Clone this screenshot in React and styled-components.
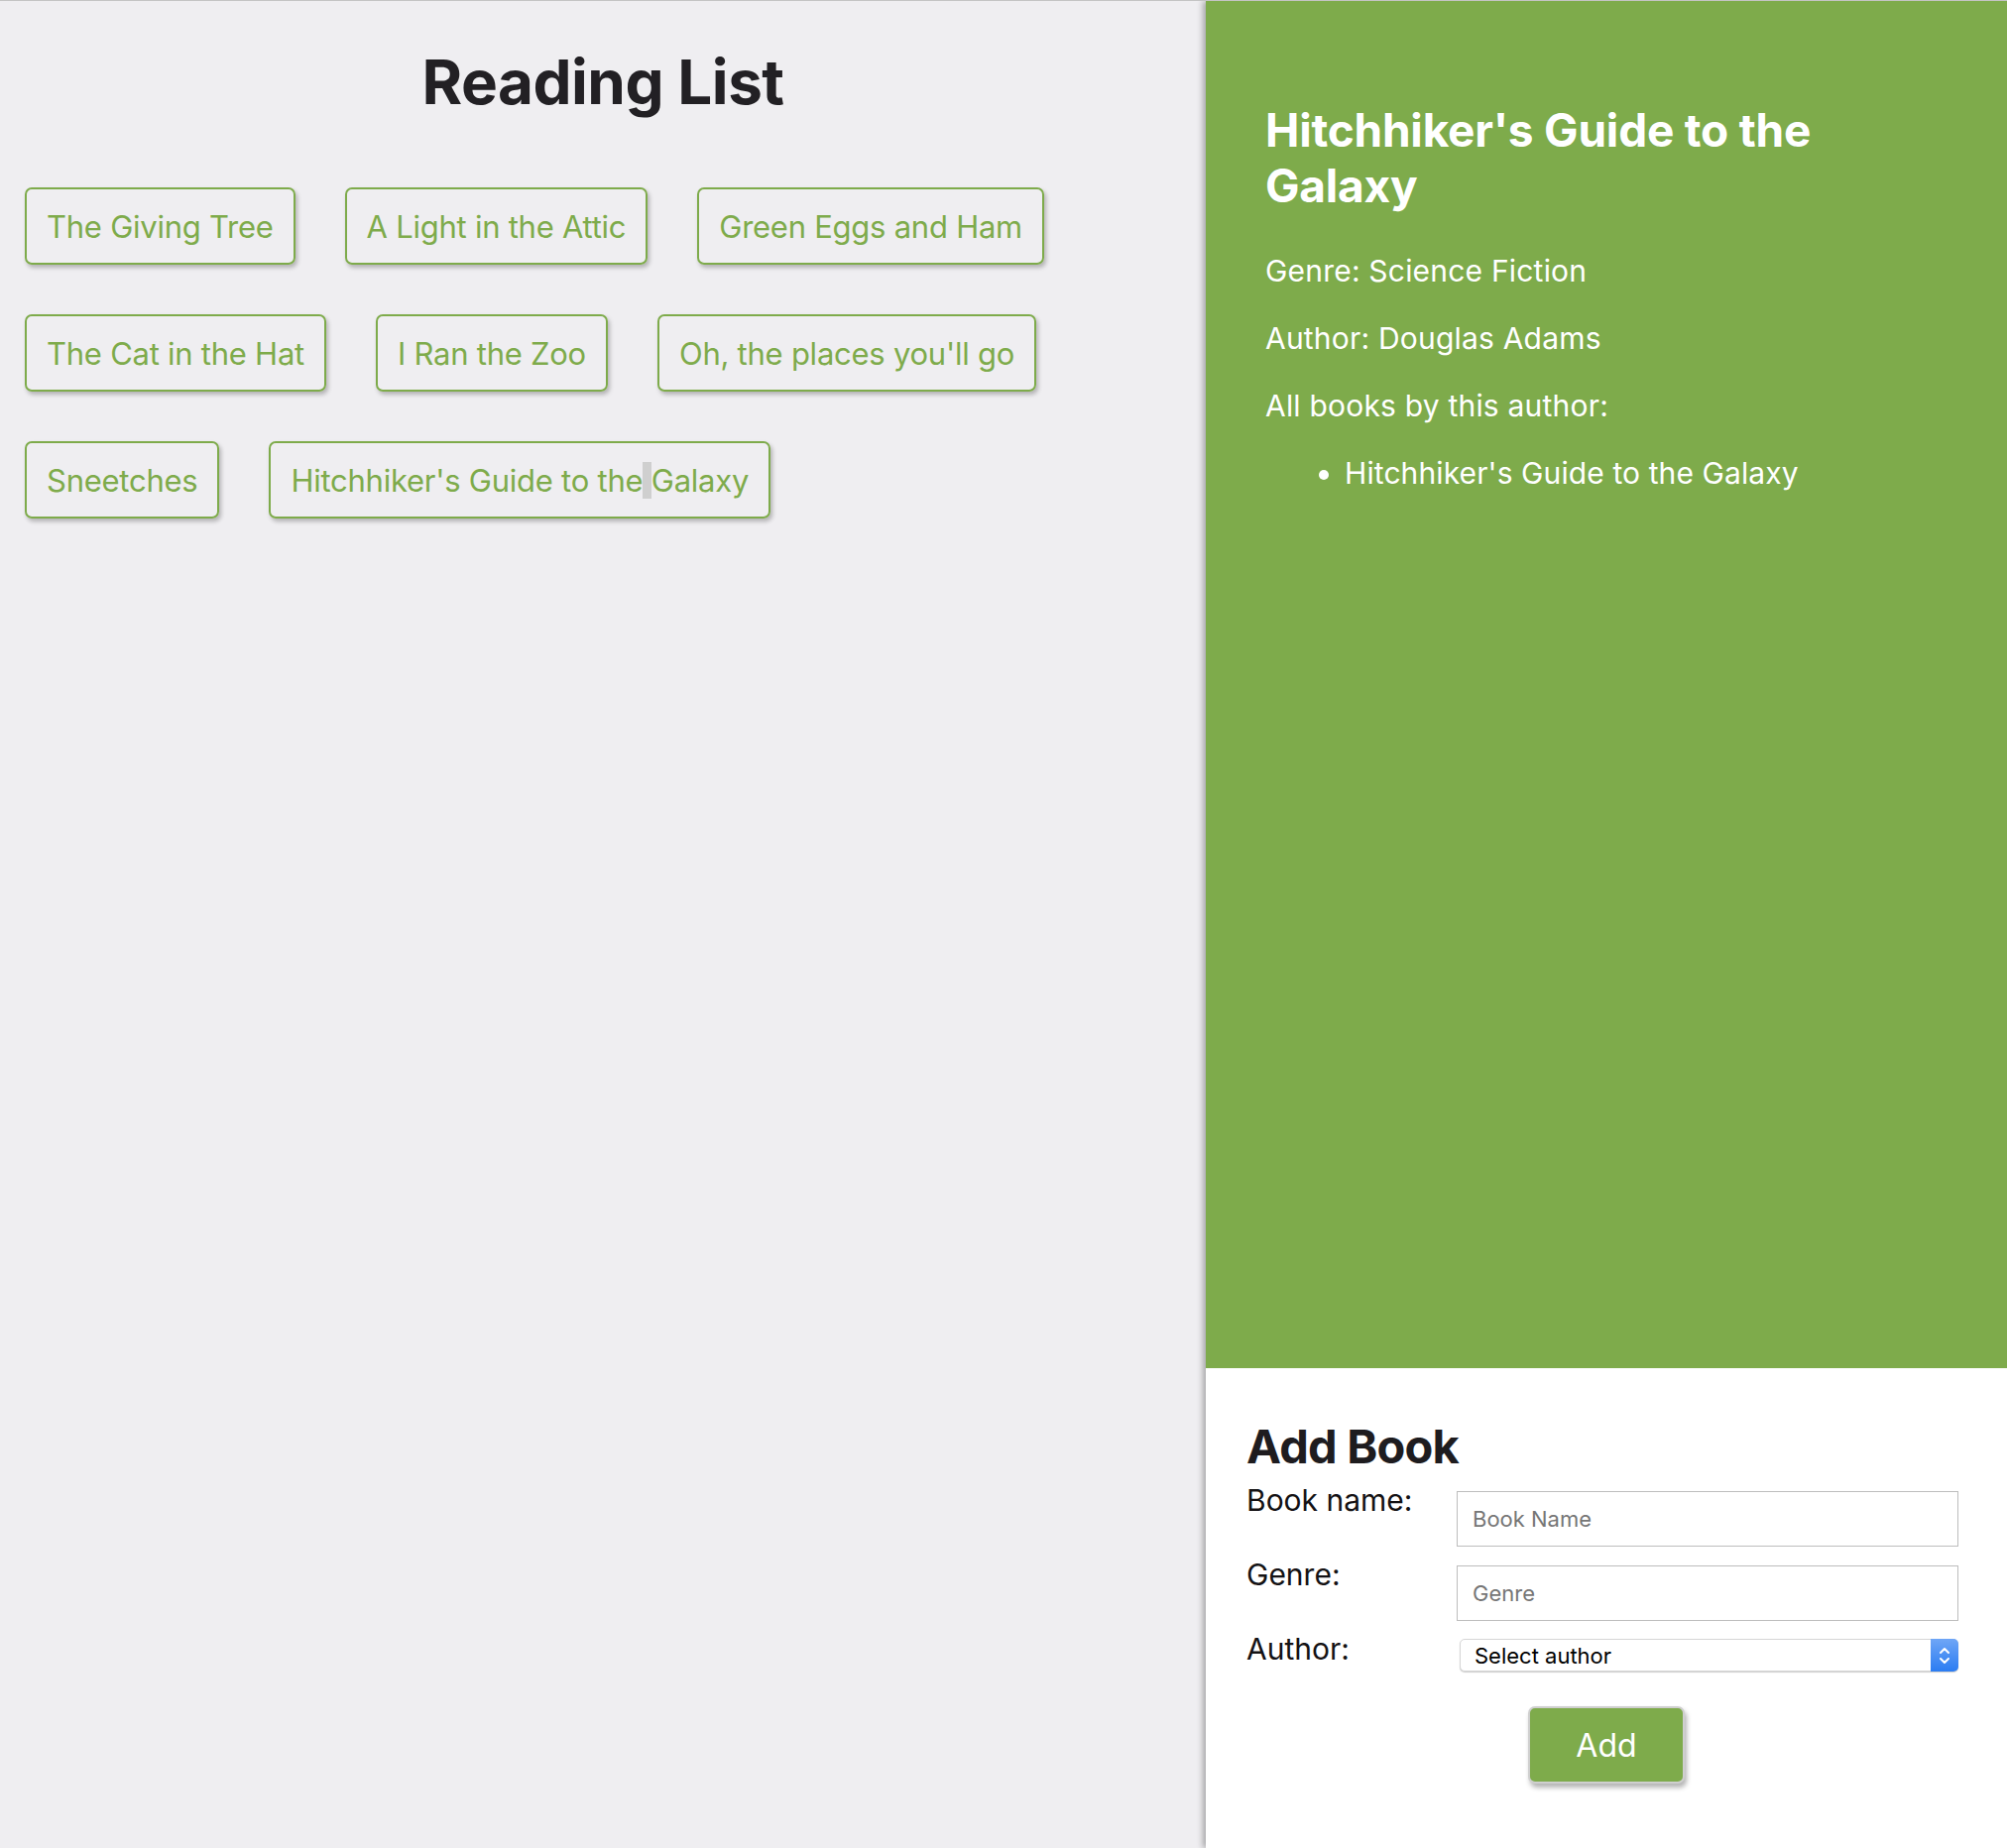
import styled, {createGlobalStyle} from "styled-components";

const GlobalStyle = createGlobalStyle`
    html, body {
        margin: 0;
        padding: 0;
    }
    body {
        font-family: Inter, "Noto Sans", "Liberation Sans", sans-serif;
        color: #222;
    }
`

const green = "#7eab4b"

const books = [
    "The Giving Tree",
    "A Light in the Attic",
    "Green Eggs and Ham",
    "The Cat in the Hat",
    "I Ran the Zoo",
    "Oh, the places you'll go",
    "Sneetches",
]

const StepIcon = () => (
    <svg width="12" height="20" viewBox="0 0 12 20" fill="none" stroke="#fff" strokeWidth="2" strokeLinecap="round" strokeLinejoin="round">
        <path d="M2 7 L6 3 L10 7"/>
        <path d="M2 13 L6 17 L10 13"/>
    </svg>
)

const App = () => {
    return (
        <>
            <GlobalStyle/>
            <Page>
                <ListSide>
                    <Title>Reading List</Title>
                    <BookList>
                        {books.map(b => (
                            <BookButton key={b}>{b}</BookButton>
                        ))}
                        <BookButton>Hitchhiker's Guide to the<Selected> </Selected>Galaxy</BookButton>
                    </BookList>
                </ListSide>
                <SideColumn>
                    <Details>
                        <DetailTitle>Hitchhiker's Guide to the Galaxy</DetailTitle>
                        <DetailLine>Genre: Science Fiction</DetailLine>
                        <DetailLine>Author: Douglas Adams</DetailLine>
                        <DetailLine>All books by this author:</DetailLine>
                        <AuthorBooks>
                            <li>Hitchhiker's Guide to the Galaxy</li>
                        </AuthorBooks>
                    </Details>
                    <AddForm onSubmit={e => e.preventDefault()}>
                        <FormTitle>Add Book</FormTitle>
                        <Field>
                            <Label>Book name:</Label>
                            <TextInput placeholder="Book Name"/>
                        </Field>
                        <Field>
                            <Label>Genre:</Label>
                            <TextInput placeholder="Genre"/>
                        </Field>
                        <Field>
                            <Label>Author:</Label>
                            <SelectWrap>
                                <Select defaultValue="">
                                    <option value="">Select author</option>
                                </Select>
                                <Stepper><StepIcon/></Stepper>
                            </SelectWrap>
                        </Field>
                        <AddButton type="submit">Add</AddButton>
                    </AddForm>
                </SideColumn>
            </Page>
        </>
    )
}

const Page = styled.div`
    display: grid;
    grid-template-columns: 1216px 1fr;
    height: 1864px;
    border-top: 1px solid #c4c4c4;
    box-sizing: border-box;
    overflow: hidden;
`

const ListSide = styled.main`
    background: #efeef1;
`

const Title = styled.h1`
    margin: 45px 0 69px;
    font-size: 62px;
    line-height: 74px;
    font-weight: 700;
    text-align: center;
    color: #222024;
    letter-spacing: -0.5px;
`

const BookList = styled.div`
    display: flex;
    flex-wrap: wrap;
    gap: 50px;
    padding: 0 25px;
`

const BookButton = styled.button`
    box-sizing: border-box;
    height: 78px;
    padding: 0 20px;
    border: 2px solid ${green};
    border-radius: 7px;
    background: transparent;
    color: ${green};
    font-family: Inter, "Liberation Sans", sans-serif;
    font-size: 31px;
    letter-spacing: -0.25px;
    white-space: nowrap;
    box-shadow: 2px 3px 4px rgba(0, 0, 0, 0.25);
    cursor: pointer;
`

const Selected = styled.span`
    background: #cfcfcf;
`

const SideColumn = styled.aside`
    display: flex;
    flex-direction: column;
    box-shadow: -3px 0 6px rgba(0, 0, 0, 0.3);
    position: relative;
    z-index: 1;
    background: #fff;
`

const Details = styled.section`
    flex: 1;
    background: ${green};
    color: #fff;
    padding: 102px 60px 0;
`

const DetailTitle = styled.h2`
    margin: 0 0 41px;
    font-size: 46px;
    line-height: 56px;
    font-weight: 700;
    letter-spacing: -0.2px;
`

const DetailLine = styled.p`
    margin: 0 0 34px;
    font-size: 30px;
    line-height: 34px;
    letter-spacing: 0.2px;
`

const AuthorBooks = styled.ul`
    margin: 0;
    padding-left: 80px;
    font-size: 30px;
    line-height: 34px;
    letter-spacing: 0.1px;
`

const AddForm = styled.form`
    display: flex;
    flex-direction: column;
    height: 484px;
    box-sizing: border-box;
    padding: 51px 49px 0 41px;
`

const FormTitle = styled.h2`
    margin: 0 0 8px;
    font-size: 47px;
    line-height: 56px;
    font-weight: 700;
    color: #1e1c1f;
    letter-spacing: -0.8px;
`

const Field = styled.div`
    display: grid;
    grid-template-columns: 212px 1fr;
    align-items: start;
    margin-bottom: 10px;
`

const Label = styled.label`
    font-size: 30px;
    line-height: 36px;
    color: #141214;
`

const TextInput = styled.input`
    box-sizing: border-box;
    margin-top: 9px;
    height: 56px;
    padding: 0 15px;
    border: 1px solid #bdbdbd;
    border-radius: 0;
    font-family: Inter, "Liberation Sans", sans-serif;
    font-size: 22px;
    color: #333;
    outline: none;
    &::placeholder {
        color: #767676;
    }
`

const SelectWrap = styled.div`
    position: relative;
    margin-top: 8px;
    margin-left: 3px;
`

const Select = styled.select`
    appearance: none;
    box-sizing: border-box;
    width: 100%;
    height: 33px;
    padding: 0 40px 0 14px;
    border: 1px solid #d6d6d6;
    border-radius: 5px;
    background: #fff;
    box-shadow: 0 1px 1px rgba(0, 0, 0, 0.2);
    font-family: Inter, "Liberation Sans", sans-serif;
    font-size: 22px;
    color: #000;
`

const Stepper = styled.span`
    position: absolute;
    top: 0;
    right: 0;
    width: 28px;
    height: 33px;
    border-radius: 0 5px 5px 0;
    background: linear-gradient(#6fa6f6, #2b7cf2);
    display: flex;
    align-items: center;
    justify-content: center;
    pointer-events: none;
`

const AddButton = styled.button`
    align-self: center;
    margin: 25px 0 0 8px;
    width: 158px;
    height: 78px;
    border: 2px solid #cfcfcf;
    border-radius: 7px;
    background: ${green};
    color: #fff;
    font-family: Inter, "Liberation Sans", sans-serif;
    font-size: 32px;
    box-shadow: 2px 4px 5px rgba(0, 0, 0, 0.3);
    cursor: pointer;
`

export default App
